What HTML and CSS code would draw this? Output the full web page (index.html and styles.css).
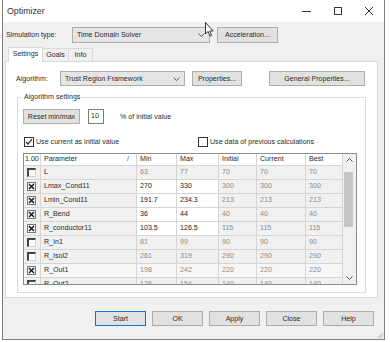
FILE: index.html
```html
<!DOCTYPE html>
<html lang="en">
<head>
    <meta charset="UTF-8">
    <title>Optimizer</title>
    <link rel="stylesheet" href="styles.css">
</head>
<body>
    <div class="window">
        <div class="titlebar">
            <span class="title">Optimizer</span>
            <div class="caption-btns">
                <span class="cap"><svg width="9" height="9" viewBox="0 0 9 9"><path d="M0 4.5H9" stroke="#333" stroke-width="1"/></svg></span>
                <span class="cap"><svg width="8" height="8" viewBox="0 0 8 8"><rect x="0.5" y="0.5" width="7" height="7" fill="none" stroke="#333"/></svg></span>
                <span class="cap"><svg width="8" height="8" viewBox="0 0 8 8"><path d="M0 0L8 8M8 0L0 8" stroke="#333" stroke-width="1"/></svg></span>
            </div>
        </div>

        <div class="sim-row">
            <span class="sim-label">Simulation type:</span>
            <div class="combo combo-sim">
                <span>Time Domain Solver</span>
                <svg class="chev" width="7" height="4" viewBox="0 0 7 4"><path d="M0.5 0.5L3.5 3.5L6.5 0.5" fill="none" stroke="#555"/></svg>
            </div>
            <button class="btn btn-accel">Acceleration...</button>
        </div>

        <div class="tabs">
            <span class="tab active">Settings</span>
            <span class="tab tab-goals">Goals</span>
            <span class="tab tab-info">Info</span>
        </div>

        <div class="tab-panel">
            <div class="algo-row">
                <span class="algo-label">Algorithm:</span>
                <div class="combo combo-algo">
                    <span>Trust Region Framework</span>
                    <svg class="chev" width="7" height="4" viewBox="0 0 7 4"><path d="M0.5 0.5L3.5 3.5L6.5 0.5" fill="none" stroke="#555"/></svg>
                </div>
                <button class="btn btn-props">Properties...</button>
                <button class="btn btn-general">General Properties...</button>
            </div>

            <div class="group">
                <span class="group-title">Algorithm settings</span>
                <div class="reset-row">
                    <button class="btn btn-reset">Reset min/max</button>
                    <div class="num-input">10</div>
                    <span class="pct">% of initial value</span>
                </div>
                <div class="check-row">
                    <label class="check check-left">
                        <span class="box checked"><svg width="8" height="8" viewBox="0 0 8 8"><path d="M1 4L3 6.2L7 1.2" fill="none" stroke="#222" stroke-width="1.2"/></svg></span>
                        Use current as initial value
                    </label>
                    <label class="check">
                        <span class="box"></span>
                        Use data of previous calculations
                    </label>
                </div>

                <div class="grid-wrap">
                    <div class="grid">
                        <div class="row head">
                            <div class="cell c-chk">1.00</div>
                            <div class="cell c-name">Parameter <span class="sort">/</span></div>
                            <div class="cell">Min</div>
                            <div class="cell">Max</div>
                            <div class="cell">Initial</div>
                            <div class="cell">Current</div>
                            <div class="cell">Best</div>
                        </div>
                        <div class="row">
                            <div class="cell c-chk"><span class="rbox"></span></div>
                            <div class="cell c-name">L</div>
                            <div class="cell ro">63</div>
                            <div class="cell ro">77</div>
                            <div class="cell ro">70</div>
                            <div class="cell ro">70</div>
                            <div class="cell ro">70</div>
                        </div>
                        <div class="row">
                            <div class="cell c-chk"><span class="rbox on"><svg width="7" height="7" viewBox="0 0 7 7"><path d="M1 1L6 6M6 1L1 6" stroke="#111" stroke-width="1.4"/></svg></span></div>
                            <div class="cell c-name">Lmax_Cond11</div>
                            <div class="cell ed">270</div>
                            <div class="cell ed">330</div>
                            <div class="cell ro">300</div>
                            <div class="cell ro">300</div>
                            <div class="cell ro">300</div>
                        </div>
                        <div class="row">
                            <div class="cell c-chk"><span class="rbox on"><svg width="7" height="7" viewBox="0 0 7 7"><path d="M1 1L6 6M6 1L1 6" stroke="#111" stroke-width="1.4"/></svg></span></div>
                            <div class="cell c-name">Lmin_Cond11</div>
                            <div class="cell ed">191.7</div>
                            <div class="cell ed">234.3</div>
                            <div class="cell ro">213</div>
                            <div class="cell ro">213</div>
                            <div class="cell ro">213</div>
                        </div>
                        <div class="row">
                            <div class="cell c-chk"><span class="rbox on"><svg width="7" height="7" viewBox="0 0 7 7"><path d="M1 1L6 6M6 1L1 6" stroke="#111" stroke-width="1.4"/></svg></span></div>
                            <div class="cell c-name">R_Bend</div>
                            <div class="cell ed">36</div>
                            <div class="cell ed">44</div>
                            <div class="cell ro">40</div>
                            <div class="cell ro">40</div>
                            <div class="cell ro">40</div>
                        </div>
                        <div class="row">
                            <div class="cell c-chk"><span class="rbox on"><svg width="7" height="7" viewBox="0 0 7 7"><path d="M1 1L6 6M6 1L1 6" stroke="#111" stroke-width="1.4"/></svg></span></div>
                            <div class="cell c-name">R_conductor11</div>
                            <div class="cell ed">103.5</div>
                            <div class="cell ed">126.5</div>
                            <div class="cell ro">115</div>
                            <div class="cell ro">115</div>
                            <div class="cell ro">115</div>
                        </div>
                        <div class="row">
                            <div class="cell c-chk"><span class="rbox"></span></div>
                            <div class="cell c-name">R_In1</div>
                            <div class="cell ro">81</div>
                            <div class="cell ro">99</div>
                            <div class="cell ro">90</div>
                            <div class="cell ro">90</div>
                            <div class="cell ro">90</div>
                        </div>
                        <div class="row">
                            <div class="cell c-chk"><span class="rbox"></span></div>
                            <div class="cell c-name">R_Isol2</div>
                            <div class="cell ro">261</div>
                            <div class="cell ro">319</div>
                            <div class="cell ro">290</div>
                            <div class="cell ro">290</div>
                            <div class="cell ro">290</div>
                        </div>
                        <div class="row focused">
                            <div class="cell c-chk"><span class="rbox on"><svg width="7" height="7" viewBox="0 0 7 7"><path d="M1 1L6 6M6 1L1 6" stroke="#111" stroke-width="1.4"/></svg></span></div>
                            <div class="cell c-name">R_Out1</div>
                            <div class="cell ro">198</div>
                            <div class="cell ro">242</div>
                            <div class="cell ro">220</div>
                            <div class="cell ro">220</div>
                            <div class="cell ro">220</div>
                        </div>
                        <div class="row">
                            <div class="cell c-chk"><span class="rbox"></span></div>
                            <div class="cell c-name">R_Out2</div>
                            <div class="cell ro">126</div>
                            <div class="cell ro">154</div>
                            <div class="cell ro">140</div>
                            <div class="cell ro">140</div>
                            <div class="cell ro">140</div>
                        </div>
                    </div>
                    <div class="scrollbar">
                        <svg class="sb-arrow" width="7" height="4" viewBox="0 0 7 4"><path d="M0.5 3.5L3.5 0.5L6.5 3.5" fill="none" stroke="#555"/></svg>
                        <div class="sb-track"><div class="sb-thumb"></div></div>
                        <svg class="sb-arrow" width="7" height="4" viewBox="0 0 7 4"><path d="M0.5 0.5L3.5 3.5L6.5 0.5" fill="none" stroke="#555"/></svg>
                    </div>
                </div>
            </div>
        </div>

        <div class="dialog-btns">
            <button class="btn btn-dlg default">Start</button>
            <button class="btn btn-dlg">OK</button>
            <button class="btn btn-dlg">Apply</button>
            <button class="btn btn-dlg">Close</button>
            <button class="btn btn-dlg">Help</button>
        </div>

        <svg class="grip" width="7" height="7" viewBox="0 0 7 7"><path d="M6 1L1 6M6 3.5L3.5 6M6 6L6 6" stroke="#aaa" stroke-width="1"/></svg>
    </div>

    <svg class="cursor" width="9" height="15" viewBox="0 0 9 15"><path d="M0.5 0.5V12L3 9.5L5 14L6.6 13.3L4.7 9H8.2Z" fill="#fff" stroke="#222" stroke-width="0.9" stroke-linejoin="round"/></svg>
</body>
</html>
```

FILE: styles.css
```css
body {
    margin: 0;
    background: #fff;
    font-family: 'Liberation Sans', Arial, sans-serif;
    font-size: 7.1px;
    color: #2b2b2b;
}

.window {
    position: relative;
    width: 383px;
    height: 340px;
    margin-left: 2px;
    box-sizing: border-box;
    border: 1px solid #7d7d7d;
    border-top: none;
    background: #f0f0f0;
}

.titlebar {
    height: 22px;
    display: flex;
    align-items: center;
    padding-left: 4px;
    background: #fff;
}

.title {
    font-size: 8.8px;
    color: #333;
}

.caption-btns {
    display: flex;
    margin-left: auto;
    height: 100%;
}

.cap {
    width: 31px;
    display: flex;
    align-items: center;
    justify-content: center;
}

/* common controls */
.btn {
    font: inherit;
    color: #2b2b2b;
    padding: 0;
    margin: 0;
    height: 15px;
    background: #e1e1e1;
    border: 1px solid #adadad;
    box-sizing: border-box;
}

.combo {
    display: flex;
    align-items: center;
    justify-content: space-between;
    box-sizing: border-box;
    height: 16px;
    padding: 0 4px 0 4px;
    background: #e5e5e5;
    border: 1px solid #acacac;
}

.sim-row {
    display: flex;
    align-items: center;
    height: 16px;
    margin-top: 5px;
    padding-left: 3px;
}

.sim-label {
    width: 66px;
}

.combo-sim {
    width: 138px;
}

.btn-accel {
    width: 61px;
    height: 16px;
    margin-left: 7px;
}

/* tabs */
.tabs {
    display: flex;
    align-items: flex-end;
    height: 14px;
    margin-top: 4px;
    padding-left: 5px;
}

.tab {
    height: 13px;
    line-height: 12px;
    box-sizing: border-box;
    text-align: center;
    border: 1px solid #d9d9d9;
    border-bottom: none;
    background: #f0f0f0;
}

.tab.active {
    width: 35px;
    height: 15px;
    line-height: 13px;
    margin-bottom: -1px;
    background: #fff;
    position: relative;
    z-index: 1;
}

.tab-goals {
    width: 26px;
    border-left: none;
}

.tab-info {
    width: 24px;
    border-left: none;
}

.tab-panel {
    width: 373px;
    height: 237px;
    margin-left: 2px;
    box-sizing: border-box;
    border: 1px solid #d9d9d9;
    background: #fff;
    overflow: hidden;
}

.algo-row {
    display: flex;
    align-items: center;
    height: 15px;
    margin-top: 9px;
    padding-left: 10px;
}

.algo-label {
    width: 44px;
}

.combo-algo {
    width: 125px;
    height: 15px;
}

.btn-props {
    width: 50px;
    margin-left: 7px;
}

.btn-general {
    width: 96px;
    margin-left: 27px;
}

/* group box */
.group {
    position: relative;
    width: 349px;
    height: 196px;
    margin: 11px 0 0 11px;
    box-sizing: border-box;
    border: 1px solid #dcdcdc;
    padding: 11px 0 0 5px;
}

.group-title {
    position: absolute;
    top: -5px;
    left: 4px;
    padding: 0 2px;
    background: #fff;
    line-height: 9px;
}

.reset-row {
    display: flex;
    align-items: center;
    height: 15px;
}

.btn-reset {
    width: 57px;
}

.num-input {
    width: 16px;
    height: 15px;
    margin-left: 8px;
    box-sizing: border-box;
    border: 1px solid #7a7a7a;
    padding-left: 2px;
    line-height: 13px;
    background: #fff;
}

.pct {
    margin-left: 16px;
}

.check-row {
    display: flex;
    align-items: center;
    height: 11px;
    margin-top: 12px;
}

.check {
    display: flex;
    align-items: center;
    gap: 2px;
}

.check-left {
    width: 174px;
    margin-left: 1px;
}

.box {
    width: 10px;
    height: 10px;
    box-sizing: border-box;
    border: 1px solid #333;
    background: #fff;
    display: flex;
    align-items: center;
    justify-content: center;
}

/* parameter grid */
.grid-wrap {
    display: flex;
    width: 334px;
    height: 132px;
    margin-top: 6px;
    box-sizing: border-box;
    border: 1px solid #8c8c8c;
    overflow: hidden;
}

.grid {
    width: 319px;
}

.row {
    display: grid;
    grid-template-columns: 17px 96px 40px 42px 38px 49px 37px;
    height: 14px;
    box-sizing: border-box;
}

.row.head {
    height: 12px;
    background: #fff;
}

.cell {
    box-sizing: border-box;
    border-right: 1px solid #d5d5d5;
    border-bottom: 1px solid #d5d5d5;
    padding-left: 3px;
    line-height: 13px;
    white-space: nowrap;
    overflow: hidden;
    background: #f0f0f0;
}

.head .cell {
    line-height: 11px;
    background: #fff;
}

.cell.c-chk {
    padding-left: 3px;
    display: flex;
    align-items: center;
}

.head .cell.c-chk {
    padding-left: 1px;
}

.cell.c-name {
    display: flex;
    justify-content: space-between;
    padding-right: 7px;
}

.cell.ro {
    color: #8c8c8c;
}

.cell.ed {
    background: #fff;
    color: #1b1b1b;
}

.sort {
    color: #444;
}

.rbox {
    width: 9px;
    height: 9px;
    box-sizing: border-box;
    border-top: 2px solid #444;
    border-left: 2px solid #444;
    border-right: 1px solid #cfcfcf;
    border-bottom: 1px solid #cfcfcf;
    background: #fff;
    display: flex;
    align-items: center;
    justify-content: center;
}

.rbox.on {
    border: 1px solid #777;
    background: #f4f4f4;
}

.row.focused {
    box-shadow: inset 0 0 0 1px #6a6a6a;
}

.row.focused .cell {
    background: #f6f6f6;
}

.scrollbar {
    width: 13px;
    display: flex;
    flex-direction: column;
    align-items: center;
    background: #f0f0f0;
}

.sb-arrow {
    margin: 4px 0;
}

.sb-track {
    flex: 1;
    width: 100%;
    padding-top: 6px;
}

.sb-thumb {
    width: 9px;
    height: 55px;
    margin-left: 1px;
    background: #c6c6c6;
}

/* bottom buttons */
.dialog-btns {
    display: flex;
    justify-content: flex-end;
    gap: 6px;
    margin-top: 13px;
    padding-right: 10px;
}

.btn-dlg {
    width: 51px;
    height: 15px;
}

.btn-dlg.default {
    border-color: #0078d7;
}

.grip {
    position: absolute;
    right: 0;
    bottom: 0;
}

.cursor {
    position: absolute;
    left: 205px;
    top: 22px;
}
```
